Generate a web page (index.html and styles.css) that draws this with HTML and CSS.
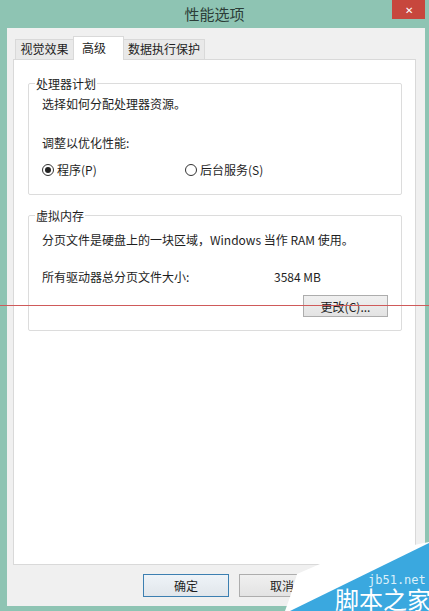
FILE: index.html
```html
<!DOCTYPE html>
<html lang="zh-CN">

<head>
  <meta charset="UTF-8" />
  <meta name="viewport" content="width=device-width, initial-scale=1.0" />
  <title>性能选项</title>
  <link rel="stylesheet" href="styles.css">
</head>

<body>
  <div class="titlebar">
    <span class="title">性能选项</span>
    <span class="close">✕</span>
  </div>

  <div class="client">
    <div class="tabs">
      <span class="tab tab-visual">视觉效果</span>
      <span class="tab active">高级</span>
      <span class="tab tab-dep">数据执行保护</span>
    </div>

    <div class="panel">
      <fieldset class="group group-cpu">
        <legend>处理器计划</legend>
        <p class="line first">选择如何分配处理器资源。</p>
        <p class="line second">调整以优化性能:</p>
        <div class="radio-row">
          <label class="radio-item wide"><span class="radio checked"></span>程序(P)</label>
          <label class="radio-item"><span class="radio"></span>后台服务(S)</label>
        </div>
      </fieldset>

      <fieldset class="group group-vm">
        <legend>虚拟内存</legend>
        <p class="line first">分页文件是硬盘上的一块区域，Windows 当作 RAM 使用。</p>
        <p class="line second"><span class="size-label">所有驱动器总分页文件大小:</span>3584 MB</p>
        <div class="button-row">
          <button class="btn">更改(C)...</button>
        </div>
      </fieldset>
    </div>

    <div class="dialog-buttons">
      <button class="btn btn-dialog default">确定</button>
      <button class="btn btn-dialog">取消</button>
    </div>
  </div>

  <div class="red-line"></div>

  <svg class="watermark" width="149" height="91" viewBox="0 0 149 91">
    <polygon points="5,91 10,77 17,54 40,44 149,22 149,91" fill="#ffffff" />
    <polygon points="10,91 149,23 149,91" fill="#3aa8df" />
    <text x="88" y="64" class="wm-url">jb51.net</text>
    <text x="55" y="89" class="wm-name">脚本之家</text>
  </svg>
</body>

</html>
```

FILE: styles.css
```css
body {
  margin: 0;
  width: 429px;
  height: 611px;
  overflow: hidden;
  position: relative;
  background-color: #8ec4b3;
  font-family: "Noto Sans CJK SC", sans-serif;
  font-size: 12px;
  color: #1e1e1e;
}

.titlebar {
  height: 28px;
  display: grid;
  grid-template-columns: 1fr auto 1fr;
  align-items: start;
}

.title {
  grid-column: 2;
  font-size: 15px;
  line-height: 28px;
  color: #2c3d38;
}

.close {
  grid-column: 3;
  justify-self: end;
  width: 33px;
  height: 19px;
  margin-right: 4px;
  background-color: #c7473d;
  color: #fff;
  font-size: 10px;
  display: flex;
  align-items: center;
  justify-content: center;
}

.client {
  margin: 0 4px 0 7px;
  height: 578px;
  box-sizing: border-box;
  padding: 8px 0 0 6px;
  background-color: #f0f0f0;
}

.tabs {
  display: flex;
  align-items: flex-end;
  height: 24px;
  margin: 0 0 -1px 2px;
  position: relative;
  z-index: 1;
}

.tab {
  height: 20px;
  box-sizing: border-box;
  margin-bottom: 1px;
  border: 1px solid #d9d9d9;
  border-bottom: none;
  background-color: #e9e9e9;
  line-height: 18px;
  text-align: center;
}

.tab-visual {
  width: 58px;
  border-right: none;
}

.tab-dep {
  width: 81px;
  border-left: none;
}

.tab.active {
  width: 51px;
  height: 24px;
  margin-bottom: 0;
  padding: 2px 0 0 8px;
  background-color: #fff;
  text-align: left;
}

.panel {
  width: 403px;
  height: 506px;
  box-sizing: border-box;
  border: 1px solid #d9d9d9;
  background-color: #fff;
  padding-top: 15px;
}

.group {
  width: 374px;
  box-sizing: border-box;
  margin: 0 0 0 14px;
  padding: 0 13px;
  border: 1px solid #dcdcdc;
  border-radius: 2px;
}

.group legend {
  margin-left: -7px;
  padding: 0 1px;
  line-height: 17px;
}

.group-cpu {
  padding-bottom: 16px;
}

.group-vm {
  margin-top: 12px;
  padding-bottom: 13px;
}

.line {
  margin: 0;
  line-height: 17px;
}

.group-cpu .first {
  margin-top: 3px;
}

.group-cpu .second {
  margin-top: 22px;
}

.group-vm .first {
  margin-top: 7px;
}

.group-vm .second {
  margin-top: 20px;
}

.size-label {
  display: inline-block;
  width: 232px;
}

.radio-row {
  display: flex;
  margin-top: 10px;
  line-height: 17px;
}

.radio-item {
  display: flex;
  align-items: center;
  gap: 3px;
}

.radio-item.wide {
  width: 143px;
}

.radio {
  width: 12px;
  height: 12px;
  box-sizing: border-box;
  border: 1px solid #333;
  border-radius: 50%;
  background-color: #fff;
  display: flex;
  align-items: center;
  justify-content: center;
}

.radio.checked::after {
  content: "";
  width: 6px;
  height: 6px;
  border-radius: 50%;
  background-color: #222;
}

.button-row {
  display: flex;
  justify-content: flex-end;
  margin-top: 10px;
}

.btn {
  width: 85px;
  height: 22px;
  padding: 0;
  border: 1px solid #adadad;
  background: linear-gradient(#f0f0f0, #e3e3e3);
  font-family: "Noto Sans CJK SC", sans-serif;
  font-size: 12px;
  color: #1e1e1e;
}

.dialog-buttons {
  display: flex;
  gap: 10px;
  margin-top: 9px;
  padding-left: 130px;
}

.btn-dialog {
  width: 86px;
  height: 23px;
}

.btn-dialog.default {
  border-color: #3c7fb1;
  background: linear-gradient(#eef3f8, #e1e6eb);
}

.red-line {
  position: absolute;
  top: 305px;
  left: 0;
  width: 429px;
  height: 1px;
  background-color: #cf5a5a;
}

.watermark {
  position: absolute;
  right: 0;
  bottom: 0;
}

.wm-url {
  font-family: "DejaVu Sans Mono", monospace;
  font-size: 12px;
  fill: #dcf0fa;
}

.wm-name {
  font-family: "Noto Sans CJK SC", sans-serif;
  font-size: 24px;
  fill: #ffffff;
}
```
